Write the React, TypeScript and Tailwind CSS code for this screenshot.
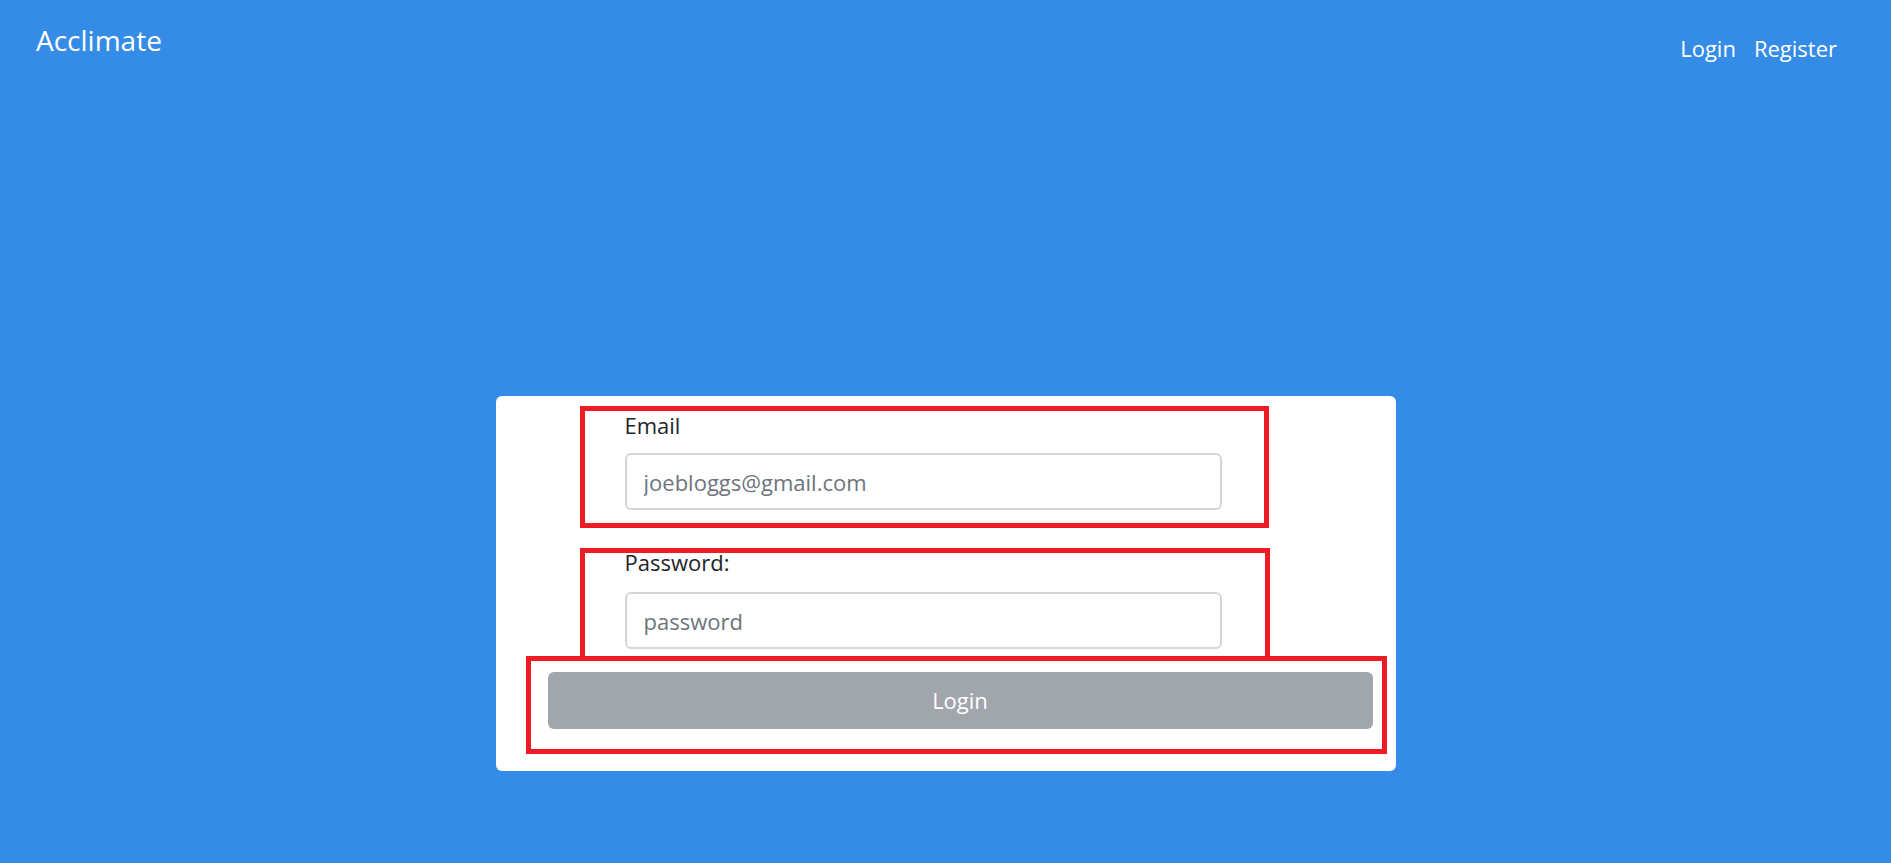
import React from "react";

export default function App() {
  return (
    <div
      className="min-h-screen w-full bg-[#358ce7] text-white"
      style={{ fontFamily: '"Open Sans", "Noto Sans", sans-serif' }}
    >
      <header className="flex items-start justify-between h-[80px] pl-[36px] pr-[54px]">
        <div className="mt-[19px] text-[28px] leading-[42px]">Acclimate</div>
        <nav className="mt-[32px] flex gap-[18px] text-[22px] leading-[33px]">
          <a href="#" className="text-white">Login</a>
          <a href="#" className="text-white">Register</a>
        </nav>
      </header>

      <div className="flex justify-center mt-[316px]">
        <div className="w-[900px] bg-white rounded-[6px] pt-[10px] pb-[17px] flex flex-col text-[#212529]">
          <div className="ml-[84px] w-[689px] h-[122px] border-[5px] border-[#ed1c24] pl-[40px] flex flex-col">
            <label className="text-[22px] leading-[28px]">Email</label>
            <input
              type="email"
              placeholder="joebloggs@gmail.com"
              className="mt-[14px] w-[597px] h-[57px] rounded-[6px] border-2 border-[#d3d7dc] px-[17px] text-[22px] text-[#212529] placeholder:text-[#6c757d] outline-none"
            />
          </div>

          <div className="mt-[20px] ml-[84px] w-[690px] h-[113px] border-[5px] border-[#ed1c24] pl-[40px] flex flex-col">
            <label className="-mt-[5px] text-[22px] leading-[28px]">Password:</label>
            <input
              type="password"
              placeholder="password"
              className="mt-[16px] w-[597px] h-[57px] rounded-[6px] border-2 border-[#d3d7dc] px-[17px] text-[22px] text-[#212529] placeholder:text-[#6c757d] outline-none"
            />
          </div>

          <div className="-mt-[5px] ml-[30px] w-[861px] h-[98px] border-[5px] border-[#ed1c24]">
            <button className="ml-[17px] mt-[11px] w-[825px] h-[57px] rounded-[6px] bg-[#a1a6ad] text-white text-[22px] flex items-center justify-center">
              Login
            </button>
          </div>
        </div>
      </div>
    </div>
  );
}
